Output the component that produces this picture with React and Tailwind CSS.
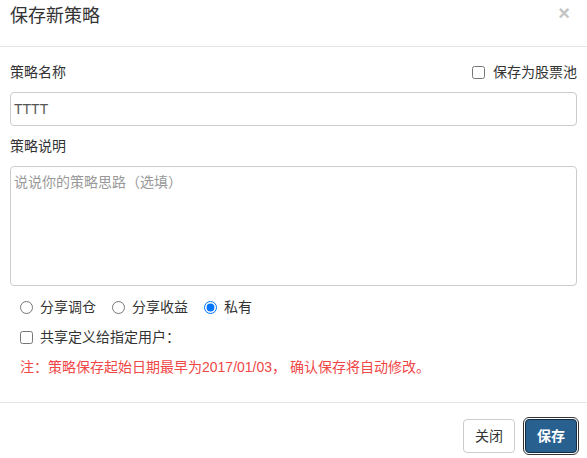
import React from 'react';

const font = "font-['Liberation_Sans','Noto_Sans_CJK_SC',sans-serif]";

export default function App() {
  return (
    <div className={`w-[587px] h-[458px] bg-white text-[#333] ${font}`}>
      {/* header */}
      <div className="h-[47px] border-b border-[#e5e5e5] px-[10px] pt-[3px] flex justify-between items-start">
        <h4 className="text-[18px] leading-[26px] text-[#333]">保存新策略</h4>
        <button className="self-start text-[20px] leading-[20px] font-bold text-[#c4c4c4] mr-[7px] mt-0">×</button>
      </div>

      {/* body */}
      <div className="px-[10px]">
        <div className="mt-[15px] h-[20px] flex justify-between items-center text-[14px]">
          <span>策略名称</span>
          <label className="flex items-center gap-[8px]">
            <input type="checkbox" className="w-[13px] h-[13px] m-0" />
            <span>保存为股票池</span>
          </label>
        </div>
        <input
          defaultValue="TTTT"
          className="mt-[10px] w-full h-[34px] border border-[#ccc] rounded-[4px] px-[3px] text-[14px] text-[#555] outline-none"
        />
        <div className="mt-[10px] h-[20px] text-[14px] leading-[20px]">策略说明</div>
        <textarea
          placeholder="说说你的策略思路（选填）"
          className="mt-[10px] block w-full h-[120px] border border-[#ccc] rounded-[4px] px-[3px] py-[5px] text-[14px] resize-none outline-none placeholder:text-[#999]"
        />
        <div className="mt-[11px] h-[20px] flex items-center text-[14px] pl-[10px]">
          <label className="flex items-center gap-[7px] mr-[16px]">
            <input type="radio" name="share" className="w-[13px] h-[13px] m-0" />
            <span>分享调仓</span>
          </label>
          <label className="flex items-center gap-[7px] mr-[16px]">
            <input type="radio" name="share" className="w-[13px] h-[13px] m-0" />
            <span>分享收益</span>
          </label>
          <label className="flex items-center gap-[7px]">
            <input type="radio" name="share" defaultChecked className="w-[13px] h-[13px] m-0" />
            <span>私有</span>
          </label>
        </div>
        <div className="mt-[10px] h-[20px] flex items-center text-[14px] pl-[10px]">
          <label className="flex items-center gap-[7px]">
            <input type="checkbox" className="w-[13px] h-[13px] m-0" />
            <span>共享定义给指定用户：</span>
          </label>
        </div>
        <div className="mt-[10px] h-[20px] leading-[20px] text-[14px] text-[#f04747] pl-[10px]">
          注：策略保存起始日期最早为2017/01/03， 确认保存将自动修改。
        </div>
      </div>

      {/* footer */}
      <div className="mt-[25px] border-t border-[#e5e5e5] flex justify-end gap-[10px] px-[10px] pt-[16px]">
        <button className="w-[52px] h-[34px] border border-[#ccc] rounded-[4px] bg-white text-[14px] text-[#333]">
          关闭
        </button>
        <button className="w-[52px] h-[34px] border border-[#122b40] rounded-[4px] bg-[#286090] text-[14px] text-white font-bold outline outline-[1px] outline-offset-[1px] outline-[#333]">
          保存
        </button>
      </div>
    </div>
  );
}
